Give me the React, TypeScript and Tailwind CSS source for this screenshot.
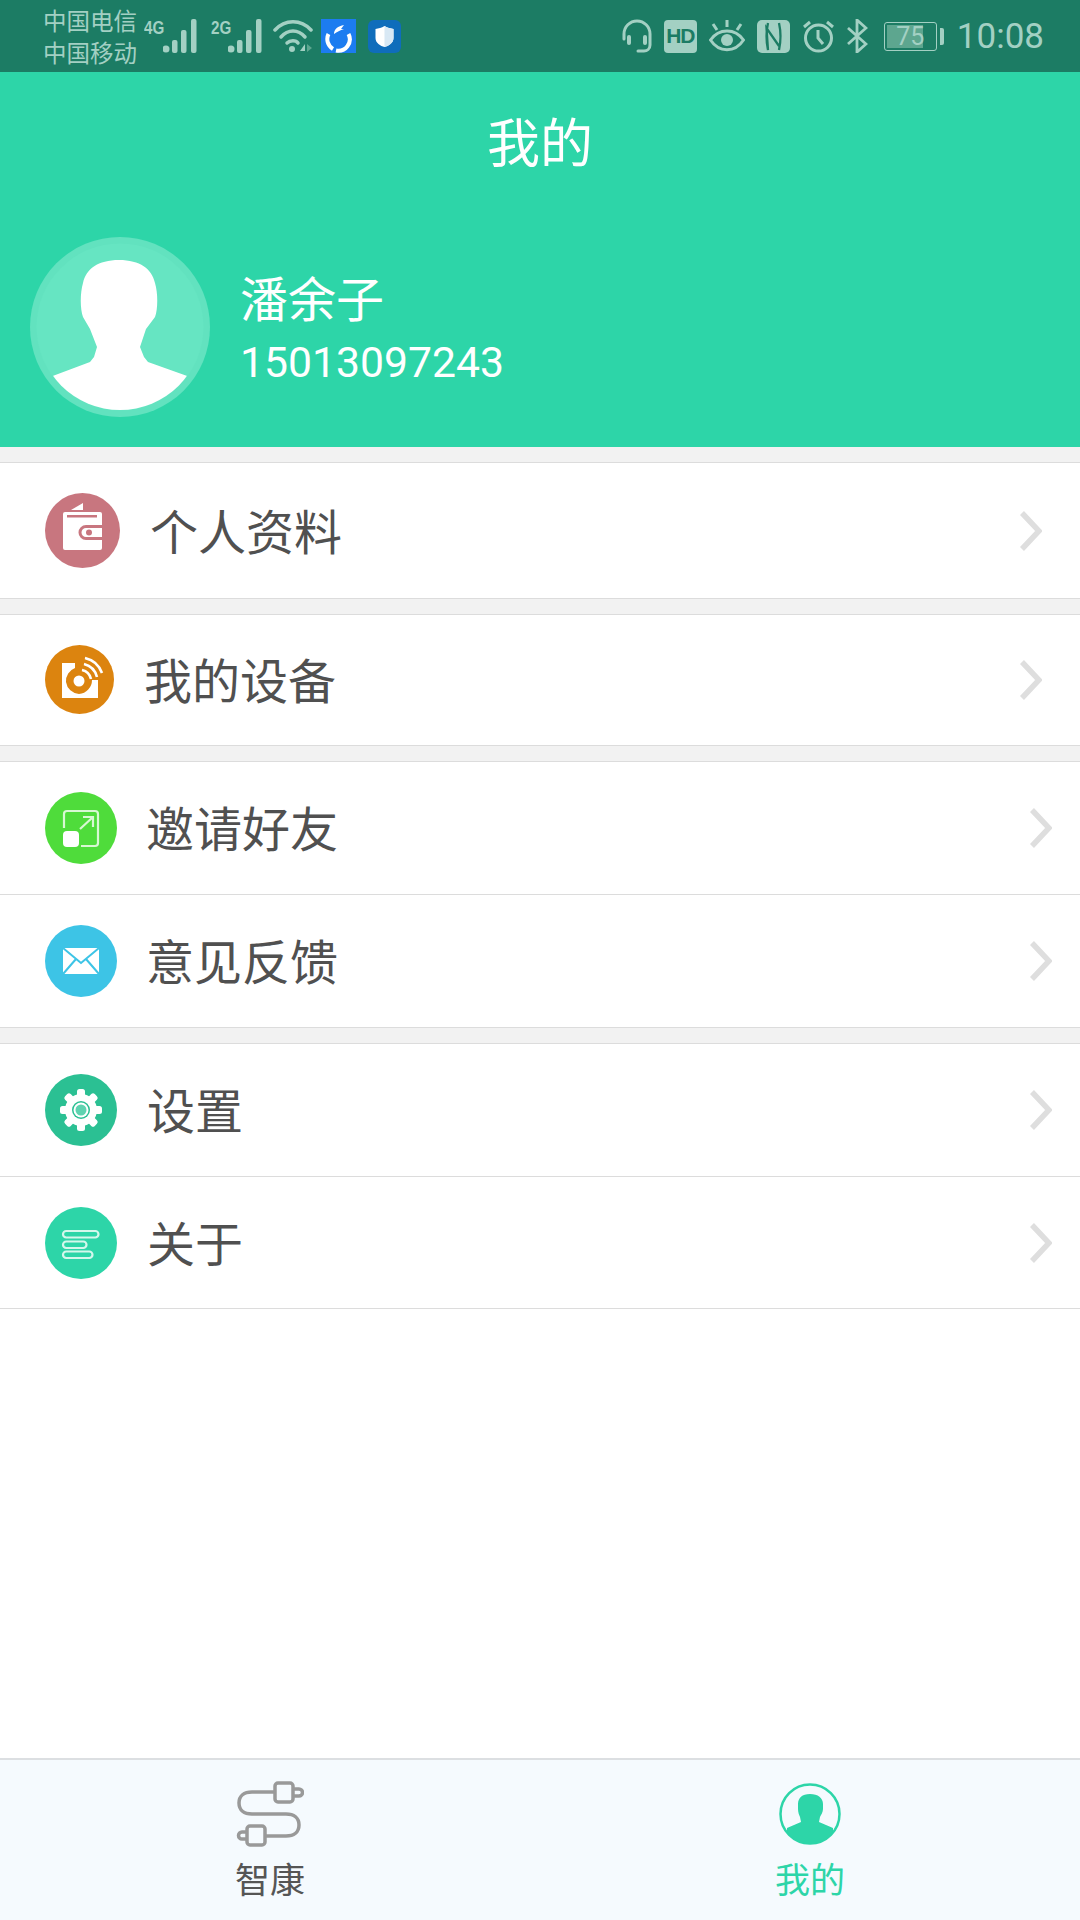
import type { ReactNode } from 'react';

const CJK = "font-['Noto_Sans_CJK_SC','Noto_Sans',sans-serif]";

function Bars() {
  return (
    <svg width="35" height="34" viewBox="0 0 35 34" fill="#a3d0c3">
      <circle cx="3" cy="30" r="3.5" />
      <rect x="9" y="21" width="5.500" height="13" rx="2" />
      <rect x="18" y="11" width="5.500" height="23" rx="2" />
      <rect x="28" y="0" width="5.500" height="34" rx="2" />
    </svg>
  );
}

function Wifi() {
  return (
    <svg width="40" height="34" viewBox="0 0 40 34" fill="none" stroke="#a3d0c3" strokeWidth="3.5" strokeLinecap="round">
      <path d="M2 11C12 0 28 0 38 11" />
      <path d="M8 18C15 10 25 10 32 18" />
      <path d="M14 24C17 21 23 21 25 24" />
      <circle cx="19" cy="30" r="3" fill="#a3d0c3" stroke="none" />
      <path d="M27 32l5-7v7z" fill="#a3d0c3" stroke="none" />
      <path d="M34 25l5 4-5 4z" fill="#5da68f" stroke="none" />
    </svg>
  );
}

function Gear() {
  const teeth = [0, 45, 90, 135, 180, 225, 270, 315];
  return (
    <g>
      <circle cx="36" cy="36" r="16" fill="#fff" />
      {teeth.map((a) => (
        <rect key={a} x="32" y="15" width="8" height="10" rx="2.5" fill="#fff" transform={`rotate(${a} 36 36)`} />
      ))}
      <circle cx="36" cy="36" r="9" fill="#2bc093" />
      <circle cx="36" cy="36" r="7.500" fill="#fff" />
      <circle cx="36" cy="36" r="5.500" fill="#5fd3b0" />
    </g>
  );
}

const rowIcons: Record<string, ReactNode> = {
  wallet: (
    <svg width="75" height="75" viewBox="0 0 75 75">
      <circle cx="37.5" cy="37.5" r="37.5" fill="#c8767f" />
      <path d="M26 17l12-7v7z" fill="#fff" />
      <rect x="18" y="19" width="39" height="38" rx="2" fill="#fff" />
      <rect x="22" y="22" width="30" height="2.500" fill="#c8767f" />
      <path d="M57 33.500H41a5.500 5.500 0 0 0 0 12h16" fill="#fff" stroke="#c8767f" strokeWidth="3" />
      <circle cx="44" cy="39.500" r="3" fill="#c8767f" />
    </svg>
  ),
  device: (
    <svg width="69" height="69" viewBox="0 0 69 69">
      <circle cx="34.5" cy="34.5" r="34.5" fill="#dc840f" />
      <path d="M17 18h13v5a14 14 0 0 0-9 14 14 14 0 0 0 13 12 14 14 0 0 0 13-14h6v18H17z" fill="#fff" />
      <circle cx="34" cy="36" r="5.500" fill="#fff" />
      <g fill="none" stroke="#fff" strokeWidth="2.6">
        <path d="M39 19a18 18 0 0 1 13 13" />
        <path d="M40 13a24 24 0 0 1 17 15" />
        <path d="M37 25a12 12 0 0 1 9 9" />
      </g>
    </svg>
  ),
  invite: (
    <svg width="72" height="72" viewBox="0 0 72 72">
      <circle cx="36" cy="36" r="36" fill="#4fdc3b" />
      <path d="M19 36V22a3 3 0 0 1 3-3h28a3 3 0 0 1 3 3v29a3 3 0 0 1-3 3H36" fill="none" stroke="#d8f8d3" strokeWidth="2.2" />
      <rect x="18" y="39" width="16" height="16" rx="4" fill="#fff" />
      <path d="M35 37l13-12M38 25h10v10" fill="none" stroke="#d8f8d3" strokeWidth="2.2" />
    </svg>
  ),
  mail: (
    <svg width="72" height="72" viewBox="0 0 72 72">
      <circle cx="36" cy="36" r="36" fill="#3dc4e6" />
      <rect x="18" y="23" width="36" height="26" rx="1" fill="#fff" />
      <path d="M18 23l18 15 18-15M18 49l13-15M54 49L41 34" fill="none" stroke="#3dc4e6" strokeWidth="2" />
    </svg>
  ),
  gear: (
    <svg width="72" height="72" viewBox="0 0 72 72">
      <circle cx="36" cy="36" r="36" fill="#2bc093" />
      <Gear />
    </svg>
  ),
  about: (
    <svg width="72" height="72" viewBox="0 0 72 72">
      <circle cx="36" cy="36" r="36" fill="#2dd5a8" />
      <g fill="none" stroke="#d5f7ec" strokeWidth="2.2">
        <rect x="18" y="24" width="35.5" height="6.5" rx="3.2" />
        <rect x="18" y="34.5" width="23.5" height="6.5" rx="3.2" />
        <rect x="18" y="44.5" width="29.5" height="6.5" rx="3.2" />
      </g>
    </svg>
  ),
};

function Row({
  icon,
  label,
  iconWidth,
  textLeft,
  chevronRight,
  height,
}: {
  icon: string;
  label: string;
  iconWidth: string;
  textLeft: string;
  chevronRight: string;
  height: string;
}) {
  return (
    <div className={`flex items-center bg-white pl-[45px] ${height} ${chevronRight}`}>
      <div className={`flex items-center ${iconWidth}`}>{rowIcons[icon]}</div>
      <span className={`pb-[4px] text-[48px] leading-none text-[#505050] ${textLeft} ${CJK}`}>{label}</span>
      <svg className="ml-auto" width="22" height="40" viewBox="0 0 22 40" fill="none" stroke="#dedede" strokeWidth="5.5">
        <path d="M2 2l17 18L2 38" />
      </svg>
    </div>
  );
}

function Group({ children }: { children: ReactNode }) {
  return <div className="mt-[15px] border-y border-[#dcdcdc] divide-y divide-[#dcdcdc]">{children}</div>;
}

export default function App() {
  return (
    <div className={`flex min-h-[1920px] w-[1080px] flex-col bg-white ${CJK}`}>
      {/* status bar */}
      <div className="flex h-[72px] items-center bg-[#1c7c64] pl-[43px] pr-[36px] text-[#a3d0c3]">
        <div className="w-[101px] text-[23.5px] leading-[32px]">
          <div>中国电信</div>
          <div>中国移动</div>
        </div>
        <div className="flex items-start">
          <span className="mb-[16px] w-[19px] origin-left scale-x-[0.8] font-['Liberation_Sans',sans-serif] text-[19px] leading-[18px] font-bold">4G</span>
          <Bars />
        </div>
        <div className="ml-[13px] flex items-start">
          <span className="mb-[16px] w-[17px] origin-left scale-x-[0.8] font-['Liberation_Sans',sans-serif] text-[19px] leading-[18px] font-bold">2G</span>
          <Bars />
        </div>
        <div className="ml-[10px]">
          <Wifi />
        </div>
        <svg className="ml-[8px]" width="35" height="34" viewBox="0 0 35 34">
          <rect width="35" height="34" fill="#1c7cf0" />
          <path d="M7.500 15A11.500 11.500 0 0 0 12 30M15 31.500A11.500 11.500 0 0 0 27.500 15" fill="none" stroke="#fff" strokeWidth="4" />
          <path d="M13 15c0-5 4-8 10-9l-3 4h3c-4 1-7 3-10 5z" fill="#fff" />
        </svg>
        <svg className="ml-[12px]" width="33" height="33" viewBox="0 0 33 33">
          <rect width="33" height="33" rx="6" fill="#0f6dbb" />
          <path d="M16.5 6c3 2 6 2.500 9 3v9c0 5-5 8-9 9-4-1-9-4-9-9V9c3-.5 6-1 9-3z" fill="#fff" />
          <path d="M16.500 6c3 2 6 2.500 9 3v9c0 5-5 8-9 9z" fill="#d8e8f4" />
        </svg>

        <svg className="ml-auto" width="32" height="34" viewBox="0 0 32 34" fill="none" stroke="#a3d0c3" strokeWidth="3">
          <path d="M3 20v-5a13 13 0 0 1 26 0v11c0 4-3 6-6 6h-6" strokeLinecap="round" />
          <rect x="6" y="16" width="4" height="10" rx="2" fill="#a3d0c3" stroke="none" />
          <rect x="22" y="16" width="4" height="10" rx="2" fill="#a3d0c3" stroke="none" />
        </svg>
        <span className="ml-[11px] flex h-[33px] w-[33px] items-center justify-center rounded-[4px] bg-[#a3d0c3] font-['Liberation_Sans',sans-serif] text-[21px] font-bold tracking-[-1px] text-[#1c7c64]">
          HD
        </span>
        <svg className="ml-[12px]" width="36" height="32" viewBox="0 0 36 32" fill="none" stroke="#a3d0c3" strokeWidth="3">
          <path d="M1.500 20C10 8 26 8 34.500 20 26 33 10 33 1.500 20z" />
          <circle cx="18" cy="20" r="6" fill="#a3d0c3" stroke="none" />
          <path d="M18 0v7M4 4l4 6M32 4l-4 6" />
        </svg>
        <svg className="ml-[12px]" width="33" height="33" viewBox="0 0 33 33">
          <rect width="33" height="33" rx="5" fill="#a3d0c3" />
          <path d="M11 3C9 12 9 21 11 30L9.500 8 22 26M22 3C24 12 24 21 22 30" fill="none" stroke="#1c7c64" strokeWidth="2.300" />
        </svg>
        <svg className="ml-[12px]" width="33" height="34" viewBox="0 0 33 34" fill="none" stroke="#a3d0c3" strokeWidth="3">
          <circle cx="16.500" cy="19" r="13" />
          <path d="M16 11v8l5 6" />
          <path d="M2 8l6-5M31 8l-6-5" />
        </svg>
        <svg className="ml-[12px]" width="21" height="34" viewBox="0 0 21 34" fill="none" stroke="#a3d0c3" strokeWidth="2.800">
          <path d="M1 9l18 16-9 8V1l9 8L1 25" />
        </svg>
        <div className="relative ml-[16px] flex h-[29px] w-[61px] items-center">
          <div className="relative h-[29px] w-[53px] rounded-[3px] border-[1.5px] border-[#a3d0c3]">
            <div className="absolute inset-y-[2px] left-[2px] w-[36px] bg-[#5da68f]" />
            <span className="absolute inset-0 flex items-center justify-center font-['Roboto',sans-serif] text-[25px] leading-none">75</span>
          </div>
          <div className="ml-[3px] h-[17px] w-[4px] rounded-r-[2px] bg-[#a3d0c3]" />
        </div>
        <span className="ml-[12px] font-['Roboto',sans-serif] text-[35px] leading-none">10:08</span>
      </div>

      {/* header */}
      <div className="h-[375px] bg-[#2dd5a8] text-white">
        <div className="pt-[33px] text-center text-[53px] leading-[70px]">我的</div>
        <div className="mt-[62px] flex items-center pl-[30px]">
          <svg width="180" height="180" viewBox="0 0 180 180">
            <defs>
              <clipPath id="avatarClip">
                <circle cx="90" cy="90" r="83" />
              </clipPath>
            </defs>
            <circle cx="90" cy="90" r="90" fill="#62e2bf" />
            <circle cx="90" cy="90" r="83.500" fill="#66e5c2" />
            <path
              clipPath="url(#avatarClip)"
              d="M89 23C68 23 56 32 53 46C50 56 50 72 53 80L60 92L67 110L64 120L60 125L20 140V180H160V140L118 125L114 120L110 110L116 92L125 80C128 72 128 56 125 46C122 32 110 23 89 23Z"
              fill="#fff"
            />
          </svg>
          <div className="mt-[4px] ml-[30px]">
            <div className="mb-[6px] text-[48px] leading-[60px]">潘余子</div>
            <div className="font-['Roboto',sans-serif] text-[42.7px] leading-[60px]">15013097243</div>
          </div>
        </div>
      </div>

      <div className="flex flex-1 flex-col bg-white">
        <div className="bg-[#f2f2f2]">
          <Group>
            <Row icon="wallet" label="个人资料" iconWidth="w-[75px]" textLeft="ml-[30px]" chevronRight="pr-[38px]" height="h-[135px]" />
          </Group>
          <Group>
            <Row icon="device" label="我的设备" iconWidth="w-[69px] mb-[2px]" textLeft="ml-[30px]" chevronRight="pr-[38px]" height="h-[130px]" />
          </Group>
          <Group>
            <Row icon="invite" label="邀请好友" iconWidth="w-[72px]" textLeft="ml-[29px]" chevronRight="pr-[28px]" height="h-[133px]" />
            <Row icon="mail" label="意见反馈" iconWidth="w-[72px]" textLeft="ml-[29px]" chevronRight="pr-[28px]" height="h-[132px]" />
          </Group>
          <Group>
            <Row icon="gear" label="设置" iconWidth="w-[72px]" textLeft="ml-[30px]" chevronRight="pr-[28px]" height="h-[133px]" />
            <Row icon="about" label="关于" iconWidth="w-[72px]" textLeft="ml-[30px]" chevronRight="pr-[28px]" height="h-[131px]" />
          </Group>
        </div>
        <div className="flex-1 bg-white" />
      </div>

      {/* tab bar */}
      <div className="grid h-[162px] grid-cols-2 border-t-2 border-[#dcdfe2] bg-[#f5fafe]">
        <div className="flex flex-col items-center pt-[21px]">
          <svg width="68" height="66" viewBox="0 0 68 66" fill="none" stroke="#999" strokeWidth="3.500">
            <path d="M40 11H16C8 11 3 15 3 22s5 11 13 11h34c8 0 13 4 13 11s-5 11-13 11H28" />
            <rect x="39" y="2" width="18" height="19" rx="3" fill="#f5fafe" />
            <rect x="11" y="45" width="18" height="19" rx="3" fill="#f5fafe" />
            <path d="M57 8h6a3.500 3.500 0 0 1 0 7h-6M11 51H6a3.500 3.500 0 0 0 0 7h5" />
          </svg>
          <span className="mt-[6px] text-[35px] leading-[50px] text-[#555]">智康</span>
        </div>
        <div className="flex flex-col items-center pt-[23px]">
          <svg width="62" height="62" viewBox="0 0 62 62">
            <circle cx="31" cy="31" r="29.500" fill="none" stroke="#2dd5a8" strokeWidth="2.500" />
            <clipPath id="tabClip">
              <circle cx="31" cy="31" r="29.500" />
            </clipPath>
            <path
              clipPath="url(#tabClip)"
              d="M31 11c-8 0-12 4-12 10v5c0 3 1 6 2 8l1 5-14 6v17h46V45l-14-6 1-5c1-2 3-5 3-8v-5c0-6-5-10-13-10z"
              fill="#2dd5a8"
            />
          </svg>
          <span className="mt-[8px] text-[35px] leading-[50px] text-[#2dd5a8]">我的</span>
        </div>
      </div>
    </div>
  );
}
